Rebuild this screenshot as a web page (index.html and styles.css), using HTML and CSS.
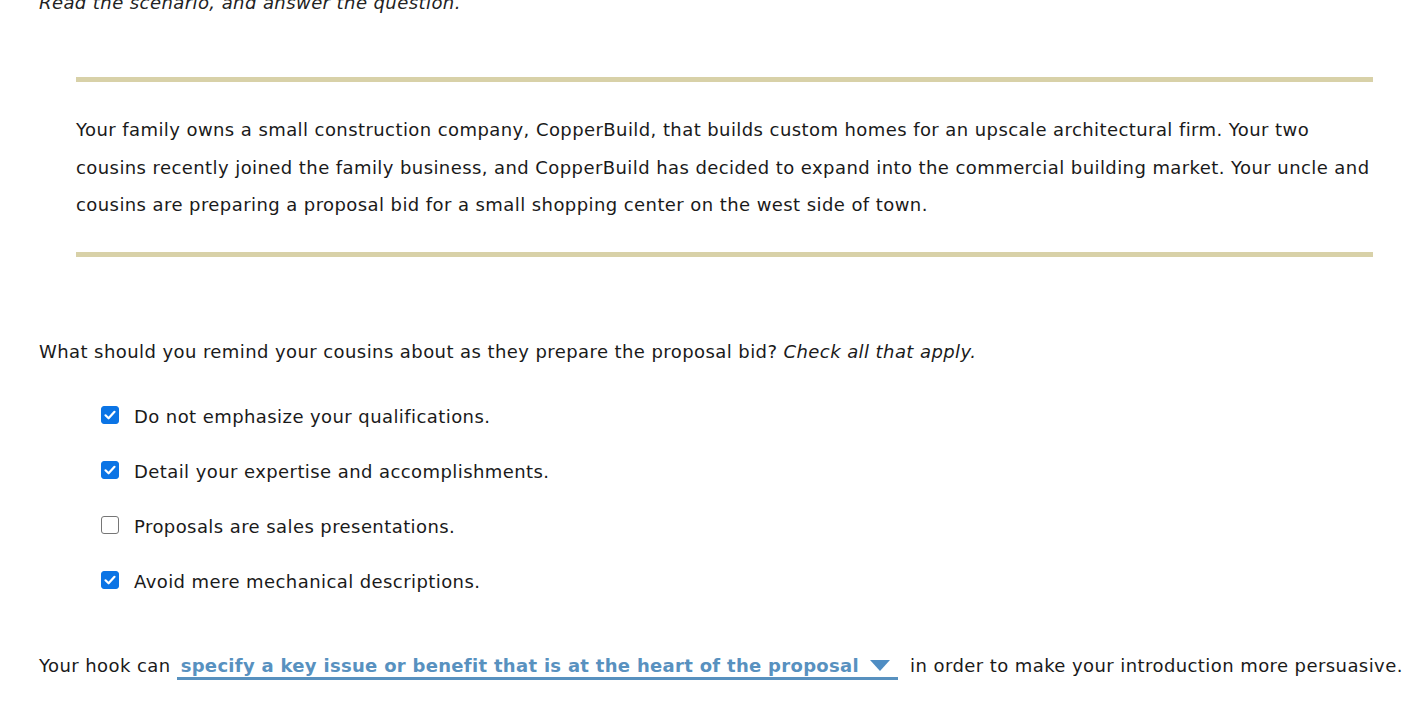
FILE: index.html
```html
<!DOCTYPE html>
<html>
<head>
<meta charset="utf-8">
<link rel="stylesheet" href="styles.css">
</head>
<body>
<div class="page">
  <p class="instruction">Read the scenario, and answer the question.</p>
  <div class="scenario">
    <p>Your family owns a small construction company, CopperBuild, that builds custom homes for an upscale architectural firm. Your two cousins recently joined the family business, and CopperBuild has decided to expand into the commercial building market. Your uncle and cousins are preparing a proposal bid for a small shopping center on the west side of town.</p>
  </div>
  <p class="question">What should you remind your cousins about as they prepare the proposal bid? <em>Check all that apply.</em></p>
  <ul class="options">
    <li><span class="box checked"><svg viewBox="0 0 18 18" width="18" height="18"><path d="M4.5 9.3 L7.6 12.3 L13.5 5.8" fill="none" stroke="#fff" stroke-width="2.2" stroke-linecap="round" stroke-linejoin="round"/></svg></span><span>Do not emphasize your qualifications.</span></li>
    <li><span class="box checked"><svg viewBox="0 0 18 18" width="18" height="18"><path d="M4.5 9.3 L7.6 12.3 L13.5 5.8" fill="none" stroke="#fff" stroke-width="2.2" stroke-linecap="round" stroke-linejoin="round"/></svg></span><span>Detail your expertise and accomplishments.</span></li>
    <li><span class="box"></span><span>Proposals are sales presentations.</span></li>
    <li><span class="box checked"><svg viewBox="0 0 18 18" width="18" height="18"><path d="M4.5 9.3 L7.6 12.3 L13.5 5.8" fill="none" stroke="#fff" stroke-width="2.2" stroke-linecap="round" stroke-linejoin="round"/></svg></span><span>Avoid mere mechanical descriptions.</span></li>
  </ul>
  <p class="hook">Your hook can <span class="select">specify a key issue or benefit that is at the heart of the proposal<svg class="caret" viewBox="0 0 20 12" width="20" height="12"><path d="M0 0 H20 L10 11 Z" fill="#4f8dc3"/></svg></span> in order to make your introduction more persuasive.</p>
</div>
</body>
</html>
```
FILE: styles.css
```css
html, body {
  margin: 0;
  padding: 0;
  background: #fff;
}
body {
  font-family: "DejaVu Sans", Verdana, sans-serif;
  font-size: 18px;
  letter-spacing: 0.42px;
  color: #1a1a1a;
}
.page {
  padding-left: 39px;
  padding-right: 10px;
}
.instruction {
  margin: -12px 0 0 0;
  line-height: 30px;
  font-style: italic;
  color: #222;
}
.scenario {
  margin: 59px 41px 0 37px;
  border-top: 5px solid #d8d1a8;
  border-bottom: 5px solid #d8d1a8;
  padding: 29px 0 28px 0;
}
.scenario p {
  margin: 0;
  line-height: 37.5px;
}
.question {
  margin: 82px 0 0 0;
  line-height: 26px;
}
.options {
  list-style: none;
  margin: 39px 0 0 62px;
  padding: 0;
  display: flex;
  flex-direction: column;
  gap: 29px;
}
.options li {
  display: flex;
  align-items: center;
  gap: 15px;
  line-height: 26px;
}
.box {
  width: 16px;
  height: 16px;
  border: 1px solid #767676;
  border-radius: 3px;
  background: #fff;
  flex: none;
  position: relative;
  top: -2px;
  display: flex;
}
.box.checked {
  background: #0b74e5;
  border-color: #0b74e5;
}
.box svg {
  margin: -1px;
}
.hook {
  margin: 58px 0 0 0;
  line-height: 26px;
  white-space: nowrap;
}
.select {
  display: inline-flex;
  align-items: center;
  gap: 11px;
  color: #5891bf;
  font-weight: bold;
  letter-spacing: 0.3px;
  border-bottom: 3px solid #5891bf;
  padding: 0 8px 0 4px;
  margin: 0 6px 0 0;
  line-height: 22px;
}
.caret {
  width: 20px;
  height: 12px;
}
```
